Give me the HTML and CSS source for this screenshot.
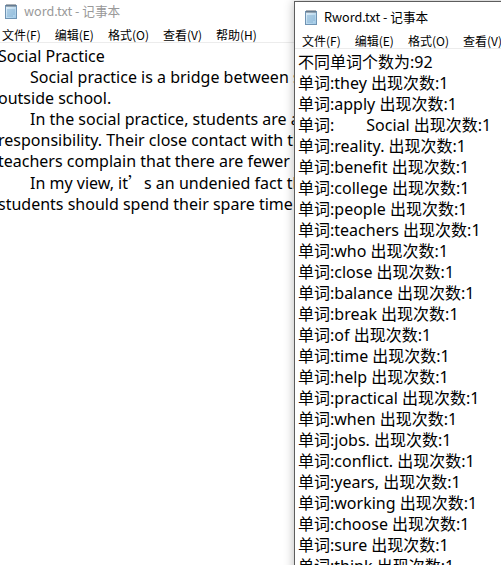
FILE: index.html
```html
<!DOCTYPE html>
<html lang="zh-CN">
<head>
<meta charset="utf-8">
<title>记事本</title>
<link rel="stylesheet" href="styles.css">
</head>
<body>
<div class="desk">
  <div class="win win-back">
    <div class="titlebar">
      <svg class="icon" viewBox="0 0 16 16" width="16" height="16">
        <defs>
          <linearGradient id="pg1" x1="0" y1="0" x2="1" y2="1">
            <stop offset="0" stop-color="#e4f2fb"/>
            <stop offset="1" stop-color="#9cc6e4"/>
          </linearGradient>
        </defs>
        <rect x="2.5" y="2.5" width="11" height="13" fill="url(#pg1)" stroke="#6f93b3"/>
        <path d="M4 1v3M6 1v3M8 1v3M10 1v3M12 1v3" stroke="#5a6470" stroke-width="1"/>
        <path d="M4 7h8M4 9h8M4 11h8M4 13h6" stroke="#86b2d3" stroke-width="1"/>
      </svg>
      <span class="title">word.txt - 记事本</span>
    </div>
    <div class="menubar">
      <span class="mi">文件(F)</span>
      <span class="mi">编辑(E)</span>
      <span class="mi">格式(O)</span>
      <span class="mi">查看(V)</span>
      <span class="mi">帮助(H)</span>
    </div>
    <div class="edit">
      <div class="ln">Social Practice</div>
      <div class="ln">　　Social practice is a bridge between school and society, which helps students learn more about the world</div>
      <div class="ln">outside school.</div>
      <div class="ln">　　In the social practice, students are able to apply what they have learned and develop a sense of</div>
      <div class="ln">responsibility. Their close contact with the people in society helps them understand reality. Many</div>
      <div class="ln">teachers complain that there are fewer and fewer chances for students to practise.</div>
      <div class="ln">　　In my view, it<span class="cjk">’</span>s an undenied fact that social practice will benefit students, so</div>
      <div class="ln">students should spend their spare time on working and helping others.</div>
    </div>
  </div>

  <div class="win win-front">
    <div class="titlebar">
      <svg class="icon" viewBox="0 0 16 16" width="16" height="16">
        <defs>
          <linearGradient id="pg2" x1="0" y1="0" x2="1" y2="1">
            <stop offset="0" stop-color="#e4f2fb"/>
            <stop offset="1" stop-color="#9cc6e4"/>
          </linearGradient>
        </defs>
        <rect x="2.5" y="2.5" width="11" height="13" fill="url(#pg2)" stroke="#6f93b3"/>
        <path d="M4 1v3M6 1v3M8 1v3M10 1v3M12 1v3" stroke="#5a6470" stroke-width="1"/>
        <path d="M4 7h8M4 9h8M4 11h8M4 13h6" stroke="#86b2d3" stroke-width="1"/>
      </svg>
      <span class="title">Rword.txt - 记事本</span>
    </div>
    <div class="menubar">
      <span class="mi">文件(F)</span>
      <span class="mi">编辑(E)</span>
      <span class="mi">格式(O)</span>
      <span class="mi">查看(V)</span>
      <span class="mi">帮助(H)</span>
    </div>
    <div class="edit">
      <div class="ln">不同单词个数为:92</div>
      <div class="ln">单词:they 出现次数:1</div>
      <div class="ln">单词:apply 出现次数:1</div>
      <div class="ln">单词:　　Social 出现次数:1</div>
      <div class="ln">单词:reality. 出现次数:1</div>
      <div class="ln">单词:benefit 出现次数:1</div>
      <div class="ln">单词:college 出现次数:1</div>
      <div class="ln">单词:people 出现次数:1</div>
      <div class="ln">单词:teachers 出现次数:1</div>
      <div class="ln">单词:who 出现次数:1</div>
      <div class="ln">单词:close 出现次数:1</div>
      <div class="ln">单词:balance 出现次数:1</div>
      <div class="ln">单词:break 出现次数:1</div>
      <div class="ln">单词:of 出现次数:1</div>
      <div class="ln">单词:time 出现次数:1</div>
      <div class="ln">单词:help 出现次数:1</div>
      <div class="ln">单词:practical 出现次数:1</div>
      <div class="ln">单词:when 出现次数:1</div>
      <div class="ln">单词:jobs. 出现次数:1</div>
      <div class="ln">单词:conflict. 出现次数:1</div>
      <div class="ln">单词:years, 出现次数:1</div>
      <div class="ln">单词:working 出现次数:1</div>
      <div class="ln">单词:choose 出现次数:1</div>
      <div class="ln">单词:sure 出现次数:1</div>
      <div class="ln">单词:think 出现次数:1</div>
    </div>
  </div>
</div>
</body>
</html>
```

FILE: styles.css
```css
html, body {
  margin: 0;
  padding: 0;
  background: #ffffff;
}
.desk {
  position: relative;
  width: 501px;
  height: 565px;
  overflow: hidden;
  background: #ffffff;
}
.win {
  position: absolute;
  background: #ffffff;
  border: 1px solid #5d5d5d;
  box-sizing: border-box;
}
.win-back {
  left: -6px;
  top: -5px;
  width: 760px;
  height: 600px;
  border-color: #aaaaaa;
}
.win-front {
  left: 294px;
  top: 1px;
  width: 420px;
  height: 600px;
  box-shadow: 0 0 10px rgba(0, 0, 0, 0.28);
}
.titlebar {
  height: 29px;
  display: flex;
  align-items: center;
  padding-left: 8px;
  font-family: "Noto Sans CJK SC", sans-serif;
  font-size: 12.6px;
  color: #000000;
}
.win-back .titlebar {
  color: #999999;
}
.icon {
  flex: none;
  margin-right: 5px;
}
.menubar {
  display: flex;
  height: 14px;
  padding-top: 3px;
  padding-left: 0px;
  border-bottom: 1px solid #ececec;
  font-family: "Noto Sans CJK SC", sans-serif;
  font-size: 12px;
  line-height: 14px;
  color: #000000;
  white-space: nowrap;
}
.mi {
  padding: 0 7px;
}
.edit {
  padding: 3px 0 0 3px;
  font-family: "Noto Sans", "Noto Sans CJK SC", sans-serif;
  font-size: 16px;
  line-height: 21px;
  color: #000000;
  white-space: nowrap;
}
.win-back .edit {
  width: 297px;
  overflow: hidden;
}
.cjk {
  font-family: "Noto Sans CJK SC", sans-serif;
}
```
